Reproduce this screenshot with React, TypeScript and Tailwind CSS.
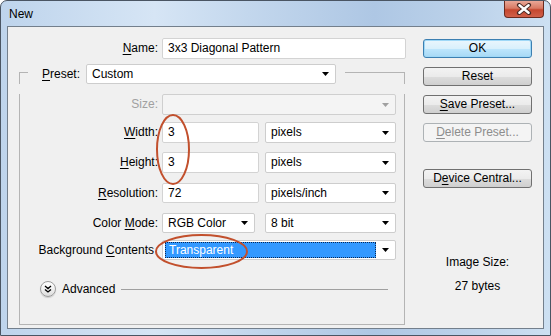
import React from 'react'

function Arrow({ disabled }: { disabled?: boolean }) {
  return (
    <svg width="7" height="4" viewBox="0 0 7 4" className="shrink-0">
      <path d="M0 0H7L3.5 4Z" fill={disabled ? '#a0a0a0' : '#000'} />
    </svg>
  )
}

function Combo({
  value,
  className,
  disabled,
  selected,
}: {
  value?: string
  className: string
  disabled?: boolean
  selected?: boolean
}) {
  return (
    <div
      className={`flex items-center rounded-[2px] border ${
        disabled ? 'bg-[#f4f4f4] border-[#cfcfcf]' : 'bg-white border-[#cdcdcd]'
      } ${className}`}
    >
      {selected ? (
        <div className="ml-[2px] flex h-[16px] flex-1 items-center border border-dotted border-[#0b2a55] bg-[#3399ff] pl-[3px] text-white">
          {value}
        </div>
      ) : (
        <div className="flex-1 pl-[5px]">{value}</div>
      )}
      <div className="flex w-[19px] justify-center">
        <Arrow disabled={disabled} />
      </div>
    </div>
  )
}

function Field({ value, className }: { value: string; className: string }) {
  return (
    <div className={`flex items-center rounded-[2px] border border-[#d3d3d3] bg-white pl-[5px] ${className}`}>
      {value}
    </div>
  )
}

function Btn({ children, disabled, primary, className = '' }: { children: React.ReactNode; disabled?: boolean; primary?: boolean; className?: string }) {
  let look = 'border-[#707070] bg-[linear-gradient(#f3f3f3_0%,#ebebeb_50%,#dddddd_51%,#cfcfcf_100%)] text-black'
  if (primary) look = 'border-[#3c7fb1] bg-[linear-gradient(#eaf6fd_0%,#d9f0fc_50%,#bee6fd_51%,#a7d9f5_100%)] shadow-[inset_0_0_0_1px_#9fd8f7] text-black'
  if (disabled) look = 'border-[#adb2b5] bg-[#f4f4f4] text-[#8d8d8d]'
  return (
    <div className={`flex h-[19px] w-[109px] items-center justify-center rounded-[3px] border ${look} ${className}`}>
      {children}
    </div>
  )
}

function Label({ children, className = '', muted }: { children: React.ReactNode; className?: string; muted?: boolean }) {
  return (
    <div className={`w-[138px] shrink-0 text-right ${muted ? 'text-[#a0a0a0]' : ''} ${className}`}>{children}</div>
  )
}

const U = ({ children }: { children: React.ReactNode }) => (
  <span className="underline underline-offset-[2px]">{children}</span>
)

export default function App() {
  return (
    <div className="relative h-[336px] w-[551px] overflow-hidden rounded-t-[7px] border border-[#4a5563] bg-[linear-gradient(90deg,#bed4ec_0%,#d6e5f5_28%,#c3d7ed_45%,#aec7e4_68%,#bcd2ea_85%,#cde0f2_100%)] font-['Liberation_Sans',Arial,sans-serif] text-[12px] leading-[15px] text-black">
      {/* title bar */}
      <div className="flex h-[25px]">
        <div className="pl-[8px] pt-[6px]">New</div>
        <div className="ml-auto mr-[6px] flex h-[17px] w-[40px] items-center justify-center rounded-b-[4px] border border-t-0 border-[#6b2a1e] bg-[linear-gradient(#e9a797_0%,#d87a64_45%,#c5472f_55%,#d0604a_100%)]">
          <svg width="16" height="12" viewBox="0 0 16 12">
            <path d="M3 2L13 10M13 2L3 10" stroke="#4a2a25" strokeWidth="4.2" strokeLinecap="round" />
            <path d="M3.4 2.3L12.6 9.7M12.6 2.3L3.4 9.7" stroke="#fff" strokeWidth="2.4" strokeLinecap="round" />
          </svg>
        </div>
      </div>

      {/* client area */}
      <div className="ml-[6px] mr-[6px] flex h-[303px] border border-[#737f8c] bg-[#f0f0f0]">
        {/* left */}
        <div className="w-[407px] pt-[11px]">
          <div className="flex items-center">
            <div className="w-[150px] text-right">
              <U>N</U>ame:
            </div>
            <Field value="3x3 Diagonal Pattern" className="ml-[4px] h-[21px] w-[244px]" />
          </div>

          <div className="ml-[11px] mt-[5px] w-[386px]">
            <div className="flex h-[20px]">
              <div className="h-[12px] w-[9px] self-end border-l border-t border-[#b4b4b4]" />
              <div className="ml-[14px] flex w-[44px] items-center">
                <U>P</U>reset:
              </div>
              <Combo value="Custom" className="h-[20px] w-[250px]" />
              <div className="ml-[9px] h-[12px] flex-1 self-end border-r border-t border-[#b4b4b4]" />
            </div>
            <div className="h-[231px] border-b border-l border-r border-[#b4b4b4]">
              <div className="mt-[10px] flex items-center">
                <Label muted>Size:</Label>
                <Combo disabled className="ml-[4px] h-[21px] w-[234px]" />
              </div>
              <div className="mt-[7px] flex items-center">
                <Label>
                  <U>W</U>idth:
                </Label>
                <Field value="3" className="ml-[4px] h-[21px] w-[97px]" />
                <Combo value="pixels" className="ml-[6px] h-[21px] w-[131px]" />
              </div>
              <div className="mt-[9px] flex items-center">
                <Label>
                  <U>H</U>eight:
                </Label>
                <Field value="3" className="ml-[4px] h-[21px] w-[97px]" />
                <Combo value="pixels" className="ml-[6px] h-[21px] w-[131px]" />
              </div>
              <div className="mt-[10px] flex items-center">
                <Label>
                  <U>R</U>esolution:
                </Label>
                <Field value="72" className="ml-[4px] h-[20px] w-[97px]" />
                <Combo value="pixels/inch" className="ml-[6px] h-[20px] w-[131px]" />
              </div>
              <div className="mt-[10px] flex items-center">
                <Label>
                  Color <U>M</U>ode:
                </Label>
                <Combo value="RGB Color" className="ml-[4px] h-[20px] w-[93px]" />
                <Combo value="8 bit" className="ml-[10px] h-[20px] w-[131px]" />
              </div>
              <div className="mt-[7px] flex items-center">
                <Label className="pr-[4px]">
                  Background <U>C</U>ontents
                </Label>
                <Combo selected value="Transparent" className="ml-[4px] h-[20px] w-[234px]" />
              </div>
              <div className="mt-[21px] flex items-center pl-[20px] pr-[16px]">
                <div className="flex h-[16px] w-[16px] items-center justify-center rounded-full border border-[#9c9c9c] bg-[linear-gradient(#ffffff_0%,#f1f1f1_50%,#dcdcdc_100%)] shadow-[0_1px_1px_rgba(0,0,0,0.15)]">
                  <svg width="8" height="8" viewBox="0 0 8 8">
                    <path d="M1 1L4 3.6L7 1M1 4.4L4 7L7 4.4" stroke="#000" strokeWidth="1.3" fill="none" />
                  </svg>
                </div>
                <div className="ml-[6px]">Advanced</div>
                <div className="ml-[6px] h-px flex-1 bg-[#a0a0a0]" />
              </div>
            </div>
          </div>
        </div>

        {/* right */}
        <div className="ml-[8px] flex w-[109px] flex-col items-center pt-[12px]">
          <Btn primary>OK</Btn>
          <Btn className="mt-[9px]">Reset</Btn>
          <Btn className="mt-[9px]">
            <span>
              <U>S</U>ave Preset...
            </span>
          </Btn>
          <Btn disabled className="mt-[9px]">
            <span>
              <U>D</U>elete Preset...
            </span>
          </Btn>
          <Btn className="mt-[27px]">
            <span>
              D<U>e</U>vice Central...
            </span>
          </Btn>
          <div className="mt-[67px]">Image Size:</div>
          <div className="mt-[9px]">27 bytes</div>
        </div>
      </div>

      {/* annotation ellipses */}
      <svg className="pointer-events-none absolute left-[-1px] top-[-1px]" width="551" height="336" viewBox="0 0 551 336">
        <ellipse cx="173" cy="149.5" rx="16" ry="34.5" fill="none" stroke="#c2502d" strokeWidth="2" />
        <ellipse cx="201.5" cy="251.5" rx="45.5" ry="16.5" fill="none" stroke="#c2502d" strokeWidth="2" />
      </svg>
    </div>
  )
}
